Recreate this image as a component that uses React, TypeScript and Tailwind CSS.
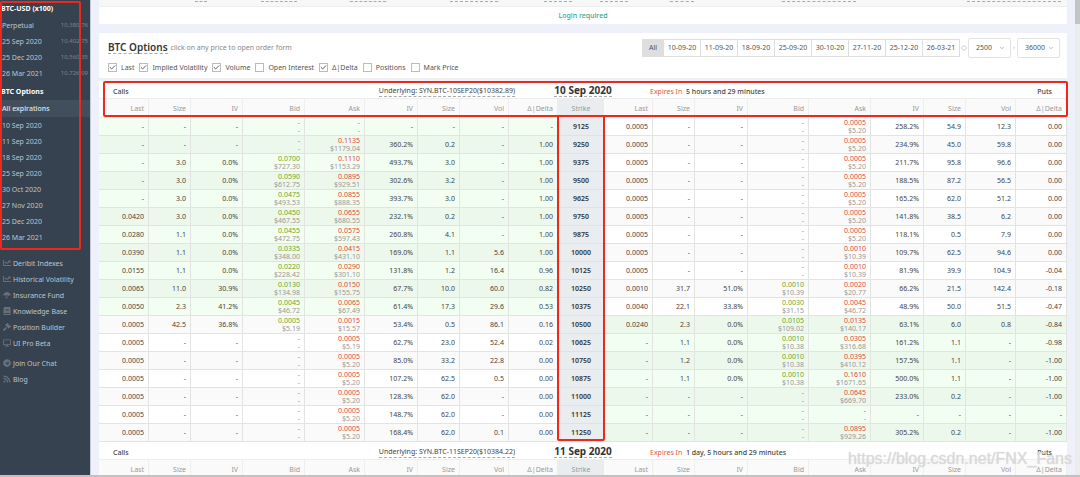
import React from 'react';
import { Check, ChevronDown, ChevronRight, Diamond } from 'lucide-react';
import { FaChartLine, FaUmbrella, FaBook, FaGavel, FaDesktop, FaTelegram, FaRss } from 'react-icons/fa';

const futures = [
  { name: 'Perpetual', price: '10,380.76' },
  { name: '25 Sep 2020', price: '10,402.75' },
  { name: '25 Dec 2020', price: '10,560.35' },
  { name: '26 Mar 2021', price: '10,726.09' },
];

const expirations = [
  '10 Sep 2020', '11 Sep 2020', '18 Sep 2020', '25 Sep 2020',
  '30 Oct 2020', '27 Nov 2020', '25 Dec 2020', '26 Mar 2021',
];

const links = [
  { name: 'Deribit Indexes', icon: FaChartLine },
  { name: 'Historical Volatility', icon: FaChartLine },
  { name: 'Insurance Fund', icon: FaUmbrella },
  { name: 'Knowledge Base', icon: FaBook },
  { name: 'Position Builder', icon: FaGavel },
  { name: 'UI Pro Beta', icon: FaDesktop },
];

const community = [
  { name: 'Join Our Chat', icon: FaTelegram },
  { name: 'Blog', icon: FaRss },
];

const toggles = [
  { name: 'Last', on: true },
  { name: 'Implied Volatility', on: true },
  { name: 'Volume', on: true },
  { name: 'Open Interest', on: false },
  { name: 'Δ|Delta', on: true },
  { name: 'Positions', on: false },
  { name: 'Mark Price', on: false },
];

const dates = ['10-09-20', '11-09-20', '18-09-20', '25-09-20', '30-10-20', '27-11-20', '25-12-20', '26-03-21'];

const sideColumns = ['Last', 'Size', 'IV', 'Bid', 'Ask', 'IV', 'Size', 'Vol', 'Δ|Delta'];
const columnWidths = [50, 42, 52, 62, 60, 53, 42, 49, 49, 46, 49, 42, 53, 61, 62, 53, 42, 50, 51];

// calls | strike | puts, each side: last size iv bid ask iv size vol delta
const chain = [
  '- - - -/- -/- - - - - | 9125 | 0.0005 - - -/- 0.0005/$5.20 258.2% 54.9 12.3 0.00',
  '- - - -/- 0.1135/$1179.04 360.2% 0.2 - 1.00 | 9250 | 0.0005 - - -/- 0.0005/$5.20 234.9% 45.0 59.8 0.00',
  '- 3.0 0.0% 0.0700/$727.30 0.1110/$1153.29 493.7% 3.0 - 1.00 | 9375 | 0.0005 - - -/- 0.0005/$5.20 211.7% 95.8 96.6 0.00',
  '- 3.0 0.0% 0.0590/$612.75 0.0895/$929.51 302.6% 3.2 - 1.00 | 9500 | 0.0005 - - -/- 0.0005/$5.20 188.5% 87.2 56.5 0.00',
  '- 3.0 0.0% 0.0475/$493.53 0.0855/$888.35 393.7% 3.0 - 1.00 | 9625 | 0.0005 - - -/- 0.0005/$5.20 165.2% 62.0 51.2 0.00',
  '0.0420 3.0 0.0% 0.0450/$467.55 0.0655/$680.55 232.1% 0.2 - 1.00 | 9750 | 0.0005 - - -/- 0.0005/$5.20 141.8% 38.5 6.2 0.00',
  '0.0280 1.1 0.0% 0.0455/$472.75 0.0575/$597.43 260.8% 4.1 - 1.00 | 9875 | 0.0005 - - -/- 0.0005/$5.20 118.1% 0.5 7.9 0.00',
  '0.0390 1.1 0.0% 0.0335/$348.00 0.0415/$431.10 169.0% 1.1 5.6 1.00 | 10000 | 0.0005 - - -/- 0.0010/$10.39 109.7% 62.5 94.6 0.00',
  '0.0155 1.1 0.0% 0.0220/$228.42 0.0290/$301.10 131.8% 1.2 16.4 0.96 | 10125 | 0.0005 - - -/- 0.0010/$10.39 81.9% 39.9 104.9 -0.04',
  '0.0065 11.0 30.9% 0.0130/$134.98 0.0150/$155.75 67.7% 10.0 60.0 0.82 | 10250 | 0.0010 31.7 51.0% 0.0010/$10.39 0.0020/$20.77 66.2% 21.5 142.4 -0.18',
  '0.0050 2.3 41.2% 0.0045/$46.72 0.0065/$67.49 61.4% 17.3 29.6 0.53 | 10375 | 0.0040 22.1 33.8% 0.0030/$31.15 0.0045/$46.72 48.9% 50.0 51.5 -0.47',
  '0.0005 42.5 36.8% 0.0005/$5.19 0.0015/$15.57 53.4% 0.5 86.1 0.16 | 10500 | 0.0240 2.3 0.0% 0.0105/$109.02 0.0135/$140.17 63.1% 6.0 0.8 -0.84',
  '0.0005 - - -/- 0.0005/$5.19 62.7% 23.0 52.4 0.02 | 10625 | - 1.1 0.0% 0.0010/$10.38 0.0305/$316.68 161.2% 1.1 - -0.98',
  '0.0005 - - -/- 0.0005/$5.20 85.0% 33.2 22.8 0.00 | 10750 | - 1.2 0.0% 0.0010/$10.38 0.0395/$410.12 157.5% 1.1 - -1.00',
  '0.0005 - - -/- 0.0005/$5.20 107.2% 62.5 0.5 0.00 | 10875 | - 1.1 0.0% 0.0010/$10.38 0.1610/$1671.65 500.0% 1.1 - -1.00',
  '0.0005 - - -/- 0.0005/$5.20 128.3% 62.0 - 0.00 | 11000 | - - - -/- 0.0645/$669.70 233.0% 0.2 - -1.00',
  '0.0005 - - -/- 0.0005/$5.20 148.7% 62.0 - 0.00 | 11125 | - - - -/- -/- - - - -',
  '0.0005 - - -/- 0.0005/$5.20 168.4% 62.0 0.1 0.00 | 11250 | - - - -/- 0.0895/$929.26 305.2% 0.2 - -1.00',
].map(line => {
  const [calls, strike, puts] = line.split(' | ');
  return { calls: calls.split(' '), strike, puts: puts.split(' ') };
});

type Row = (typeof chain)[number];

const spot = 10382;

const sideBackground = (inMoney: boolean, even: boolean) => {
  if (inMoney) return even ? 'bg-[#f1fef1]' : 'bg-[#ecf8ec]';
  return even ? 'bg-white' : 'bg-[#fafafa]';
};

const NavIconLink = ({ name, icon: Icon }: { name: string; icon: React.ElementType }) => (
  <a href="#" className="flex h-4 items-center gap-[2px] pl-[3px]">
    <Icon className="size-2 shrink-0 text-[#66717c]" />
    {name}
  </a>
);

const Sidebar = () => (
  <nav className="relative w-[90px] shrink-0 bg-[#36424f] whitespace-nowrap text-[#bdc5cc]">
    <h2 className="flex h-4 items-center pl-px font-bold text-white">BTC-USD (x100)</h2>
    <div className="pt-px pb-[2px]">
      {futures.map(item => (
        <a key={item.name} href="#" className="flex h-4 items-center justify-between pr-[2px] pl-[2px]">
          {item.name}
          <span className="text-[6px] text-[#7a848e]">{item.price}</span>
        </a>
      ))}
    </div>
    <h2 className="flex h-4 items-center pl-px font-bold text-white">BTC Options</h2>
    <a href="#" className="mt-px flex h-[17px] items-center bg-[#414e5c] pl-[2px] font-medium text-[#e2e6ea]">All expirations</a>
    {expirations.map(name => (
      <a key={name} href="#" className="flex h-4 items-center pl-[2px]">{name}</a>
    ))}
    <div className="pt-[10px] pb-1">
      {links.map(link => <NavIconLink key={link.name} {...link} />)}
    </div>
    {community.map(link => <NavIconLink key={link.name} {...link} />)}
    <div className="pointer-events-none absolute top-px left-0 h-[249px] w-[81px] rounded-xs border-2 border-[#f0281c]" />
  </nav>
);

const StrikeSelect = ({ label, value }: { label: string; value: string }) => (
  <div className="relative">
    <select
      aria-label={label}
      defaultValue={value}
      className="h-5 w-[43px] appearance-none rounded-xs border border-[#e3e3e3] bg-white pl-[7px] text-[7px] text-[#555]"
    >
      <option>{value}</option>
    </select>
    <ChevronDown className="pointer-events-none absolute top-[7px] right-[6px] size-[6px] text-[#777]" />
  </div>
);

const Toolbar = () => (
  <div className="h-[46px] border-b border-[#eee] bg-white pr-[7px] pl-[9px]">
    <div className="flex h-[29px] items-center justify-between">
      <div className="flex items-center gap-[3px]">
        <h1 className="border-b border-dashed border-[#aaa] text-[10px] leading-3 font-semibold text-[#333]">BTC Options</h1>
        <span className="text-[#888]">click on any price to open order form</span>
      </div>
      <div className="flex items-center gap-px">
        <div className="flex h-[18px] border border-[#dedede] text-[#555]">
          <button type="button" className="w-5 bg-[#dedede]">All</button>
          {dates.map(date => (
            <button key={date} type="button" className="w-[37px] border-l border-[#dedede]">{date}</button>
          ))}
        </div>
        <Diamond className="size-[6px] text-[#999]" />
        <StrikeSelect label="Lowest strike" value="2500" />
        <ChevronRight className="size-[4px] text-[#777]" />
        <StrikeSelect label="Highest strike" value="36000" />
      </div>
    </div>
    <div className="flex h-[11px] items-center gap-[5px] text-[#555]">
      {toggles.map(toggle => (
        <label key={toggle.name} className="relative flex items-center gap-1">
          <input type="checkbox" defaultChecked={toggle.on} className="peer size-[9px] appearance-none border border-[#bbb] bg-white" />
          <Check strokeWidth={3} className="absolute left-px hidden size-[7px] text-[#444] peer-checked:block" />
          {toggle.name}
        </label>
      ))}
    </div>
  </div>
);

const Cell = ({ value, column, className }: { value: string; column: number; className: string }) => {
  const [price, usd] = value.split('/');
  return (
    <td className={`border-r border-b border-[#e2e4e2] pr-1 text-right text-[#444] ${className}`}>
      {usd ? (
        <div className="leading-[8px]">
          <div className={column === 3 ? 'text-[#6aa82e]' : 'text-[#e0483c]'}>{price}</div>
          <div className="text-[#999]">{usd}</div>
        </div>
      ) : value}
    </td>
  );
};

interface ExpiryProps {
  date: string;
  underlying: string;
  expiresIn: string;
  rows: Row[];
}

const Expiry = ({ date, underlying, expiresIn, rows }: ExpiryProps) => (
  <section className="bg-white text-[#444]">
    <div className="grid h-[18px] grid-cols-[1fr_54px_1fr] items-center border-b border-[#eee] pt-[3px] whitespace-nowrap">
      <div className="flex items-center justify-between pr-[41px] pl-[14px]">
        <span className="font-medium">Calls</span>
        <a href="#" className="border-b border-dashed border-[#aaa] leading-[10px]">{underlying}</a>
      </div>
      <h2 className="flex justify-center text-[10px] leading-[11px] font-bold text-[#333]">
        <span className="border-b border-dashed border-[#aaa]">{date}</span>
      </h2>
      <div className="flex items-center justify-between pr-[15px] pl-10 font-medium">
        <span><span className="font-normal text-[#e0584c]">Expires In</span>&nbsp; {expiresIn}</span>
        <span>Puts</span>
      </div>
    </div>
    <table className="w-full table-fixed border-separate border-spacing-0">
      <colgroup>
        {columnWidths.map((width, i) => <col key={i} style={{ width }} />)}
      </colgroup>
      <thead>
        <tr className="h-[19px] bg-[#fafafa] text-[#999]">
          {sideColumns.map((name, i) => <th key={i} className="border-r border-b border-[#eee] pr-1 text-right font-normal">{name}</th>)}
          <th className="bg-[#e9edef] font-normal">Strike</th>
          {sideColumns.map((name, i) => <th key={i} className="border-r border-b border-[#eee] pr-1 text-right font-normal">{name}</th>)}
        </tr>
      </thead>
      <tbody>
        {rows.map((row, r) => {
          const inMoney = Number(row.strike) < spot;
          const callBackground = sideBackground(inMoney, r % 2 === 0);
          const putBackground = sideBackground(!inMoney, r % 2 === 0);
          return (
            <tr key={row.strike} className="h-[18px]">
              {row.calls.map((value, i) => <Cell key={i} value={value} column={i} className={callBackground} />)}
              <th scope="row" className="border-b border-[#dfe3e5] bg-[#e9edef] font-semibold text-[#333]">{row.strike}</th>
              {row.puts.map((value, i) => <Cell key={i} value={value} column={i} className={putBackground} />)}
            </tr>
          );
        })}
      </tbody>
    </table>
  </section>
);

export default function App() {
  return (
    <div className="relative flex h-screen flex-col overflow-hidden bg-[#eef1fa] font-['Noto_Sans',sans-serif] text-[7px] leading-[9px]">
      <div className="flex min-h-0 grow">
        <Sidebar />
        <main className="min-w-0 grow overflow-hidden border-l border-[#c5cad6] pr-2 pl-2">
          <div className="grid h-[7px] grid-cols-[66fr_89fr_100fr_94fr_56fr_70fr_112fr_185fr_100fr] border-b border-[#eee] bg-[#f6f7f7] pl-24">
            {['w-3', 'w-9', 'w-9', 'w-12', 'w-7', 'w-7', 'w-6', 'w-[74px]', 'w-[94px]'].map((width, i) => (
              <span key={i} className={`h-[2px] border-b border-dashed border-[#aaa] ${width}`} />
            ))}
          </div>
          <div className="flex h-[17px] items-center justify-center bg-white">
            <a href="#" className="font-medium text-[#2fa893]">Login required</a>
          </div>
          <div className="mt-[9px]">
            <Toolbar />
            <div className="relative pt-[2px]">
              <Expiry
                date="10 Sep 2020"
                underlying="Underlying: SYN.BTC-10SEP20($10382.89)"
                expiresIn="5 hours and 29 minutes"
                rows={chain}
              />
              <div className="pointer-events-none absolute top-[2px] -right-px left-1 h-9 rounded-xs border-2 border-[#f0281c]" />
              <div className="pointer-events-none absolute top-9 bottom-px left-[calc(50%-26px)] w-12 rounded-xs border-2 border-[#f0281c]" />
            </div>
            <Expiry
              date="11 Sep 2020"
              underlying="Underlying: SYN.BTC-11SEP20($10384.22)"
              expiresIn="1 day, 5 hours and 29 minutes"
              rows={[]}
            />
          </div>
        </main>
        <div className="w-[5px] shrink-0 bg-[#ececec]">
          <div className="h-6 bg-[#c4c4c4]" />
        </div>
      </div>
      <div className="h-[2px] shrink-0 bg-[#c2c2c2]" />
      <p className="absolute right-2 bottom-2 font-['Liberation_Sans',sans-serif] text-[16px] leading-5 text-[#dcdcdc]/80 [text-shadow:0_0_1px_#ccc]">
        https://blog.csdn.net/FNX_Fans
      </p>
    </div>
  );
}
